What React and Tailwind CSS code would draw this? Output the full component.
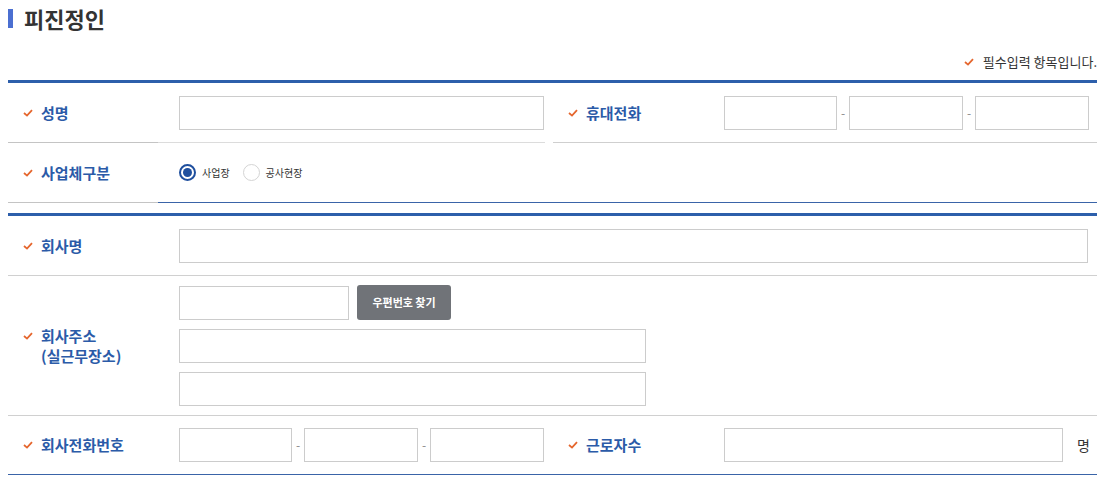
const FONT = { fontFamily: '"Noto Sans CJK KR", "Noto Sans", sans-serif' }

const Check = () => (
  <svg width="10" height="8" viewBox="0 0 10 8" className="shrink-0">
    <polyline points="1,4 4,6.6 9,1.2" fill="none" stroke="#e5662d" strokeWidth="1.8" />
  </svg>
)

const Label = ({ children }) => (
  <div className="flex items-start gap-[8px] pl-[15px]">
    <div className="h-[20px] flex items-center"><Check /></div>
    <div className="text-[15px] font-bold leading-[20px] text-[#2b5ba8]">{children}</div>
  </div>
)

const Input = ({ className = '' }) => (
  <div className={`h-[34px] shrink-0 border border-[#cccccc] bg-white ${className}`} />
)

const Dash = () => <span className="w-[12px] shrink-0 text-center text-[12px] text-[#888]">-</span>

const Phone = () => (
  <div className="flex items-center">
    <Input className="w-[113px]" />
    <Dash />
    <Input className="w-[114px]" />
    <Dash />
    <Input className="w-[114px]" />
  </div>
)

const Radio = ({ checked, children }) => (
  <label className="flex items-center gap-[6px]">
    {checked ? (
      <span className="w-[17px] h-[17px] rounded-full border-2 border-[#1f4f9e] flex items-center justify-center">
        <span className="w-[9px] h-[9px] rounded-full bg-[#1f4f9e]" />
      </span>
    ) : (
      <span className="w-[17px] h-[17px] rounded-full border border-[#d4d4d4]" />
    )}
    <span className="text-[10px] text-[#333]">{children}</span>
  </label>
)

export default function App() {
  return (
    <div className="w-[1110px] h-[480px] bg-white px-[8px] pt-[8px]" style={FONT}>
      {/* title */}
      <div className="flex items-center gap-[11px]">
        <span className="w-[5px] h-[19px] bg-[#4b6fd1]" />
        <h2 className="text-[22px] font-bold leading-[20px] text-[#333]">피진정인</h2>
      </div>

      <div className="w-[1089px] flex justify-end items-center gap-[9px] mt-[24px] h-[20px]">
        <Check />
        <span className="text-[13px] text-[#333]">필수입력 항목입니다.</span>
      </div>

      {/* table 1 */}
      <div className="w-[1089px] mt-[8px] border-t-[3px] border-[#2d5fab]">
        <div className="flex h-[60px]">
          <div className="w-[150px] flex items-center border-b border-[#c4c4c4]"><Label>성명</Label></div>
          <div className="w-[387px] flex items-center pl-[21px] border-b border-[#dcdcdc]">
            <Input className="w-[365px]" />
          </div>
          <div className="w-[150px] ml-[8px] flex items-center border-b border-[#cfcfcf]"><Label>휴대전화</Label></div>
          <div className="flex-1 flex items-center pl-[21px] border-b border-[#cfcfcf]">
            <Phone />
          </div>
        </div>
        <div className="flex h-[60px]">
          <div className="w-[150px] flex items-center border-b border-[#c4c4c4]"><Label>사업체구분</Label></div>
          <div className="flex-1 flex items-center gap-[13px] pl-[21px] border-b border-[#3a64a8]">
            <Radio checked>사업장</Radio>
            <Radio>공사현장</Radio>
          </div>
        </div>
      </div>

      {/* table 2 */}
      <div className="w-[1089px] mt-[10px] border-t-[3px] border-[#2d5fab]">
        <div className="flex h-[60px] border-b border-[#d0d0d0]">
          <div className="w-[150px] flex items-center"><Label>회사명</Label></div>
          <div className="flex-1 flex items-center pl-[21px] pr-[9px]">
            <Input className="w-full" />
          </div>
        </div>
        <div className="flex border-b border-[#d0d0d0]">
          <div className="w-[150px] flex items-center"><Label>회사주소<br />(실근무장소)</Label></div>
          <div className="flex-1 flex flex-col gap-[9px] pl-[21px] py-[9px]">
            <div className="flex items-center gap-[8px]">
              <Input className="w-[170px]" />
              <button className="w-[94px] h-[35px] rounded-[3px] bg-[#707378] text-white text-[11px] font-bold">
                우편번호 찾기
              </button>
            </div>
            <Input className="w-[467px]" />
            <Input className="w-[467px]" />
          </div>
        </div>
        <div className="flex h-[59px] border-b border-[#3a64a8]">
          <div className="w-[150px] flex items-center"><Label>회사전화번호</Label></div>
          <div className="w-[387px] flex items-center pl-[21px]">
            <Phone />
          </div>
          <div className="w-[150px] ml-[8px] flex items-center"><Label>근로자수</Label></div>
          <div className="flex-1 flex items-center pl-[21px]">
            <Input className="w-[339px]" />
            <span className="ml-[14px] text-[14px] text-[#333]">명</span>
          </div>
        </div>
      </div>
    </div>
  )
}
